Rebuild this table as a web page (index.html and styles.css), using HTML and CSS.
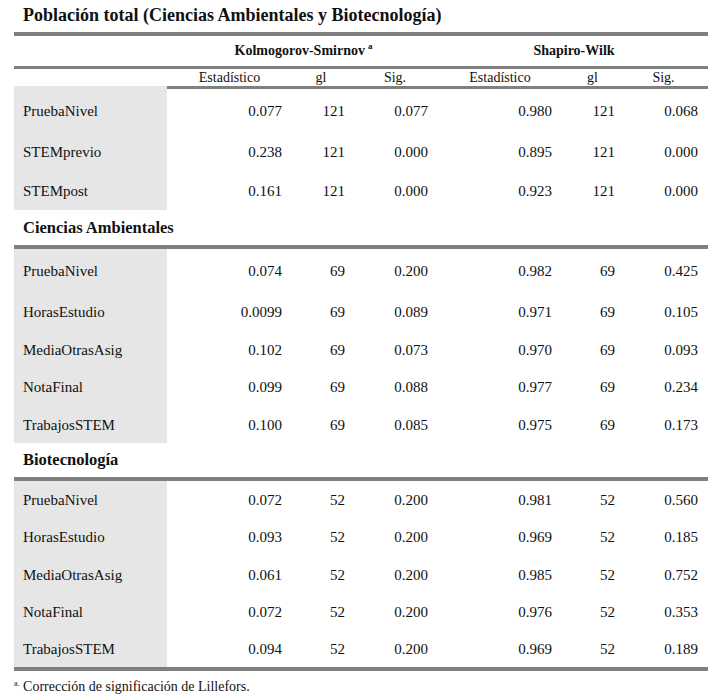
FILE: index.html
```html
<!DOCTYPE html>
<html lang="es">
<head>
<meta charset="utf-8">
<title>Pruebas de normalidad</title>
<link rel="stylesheet" href="styles.css">
</head>
<body>
<div class="page">
  <div class="title">Población total (Ciencias Ambientales y Biotecnología)</div>
  <div class="tbl">
    <div class="row grp">
      <div class="lab"></div>
      <div class="gh ks">Kolmogorov-Smirnov <sup>a</sup></div>
      <div class="gh sw">Shapiro-Wilk</div>
    </div>
    <div class="row sub">
      <div class="lab"></div>
      <div>Estadístico</div><div>gl</div><div>Sig.</div>
      <div>Estadístico</div><div>gl</div><div>Sig.</div>
    </div>

    <div class="row data h43"><div class="lab">PruebaNivel</div><div>0.077</div><div>121</div><div>0.077</div><div>0.980</div><div>121</div><div>0.068</div></div>
    <div class="row data h39"><div class="lab">STEMprevio</div><div>0.238</div><div>121</div><div>0.000</div><div>0.895</div><div>121</div><div>0.000</div></div>
    <div class="row data h39"><div class="lab">STEMpost</div><div>0.161</div><div>121</div><div>0.000</div><div>0.923</div><div>121</div><div>0.000</div></div>

    <div class="section s1">Ciencias Ambientales</div>
    <div class="row data h42"><div class="lab">PruebaNivel</div><div>0.074</div><div>69</div><div>0.200</div><div>0.982</div><div>69</div><div>0.425</div></div>
    <div class="row data h40"><div class="lab">HorasEstudio</div><div>0.0099</div><div>69</div><div>0.089</div><div>0.971</div><div>69</div><div>0.105</div></div>
    <div class="row data h36"><div class="lab">MediaOtrasAsig</div><div>0.102</div><div>69</div><div>0.073</div><div>0.970</div><div>69</div><div>0.093</div></div>
    <div class="row data h38"><div class="lab">NotaFinal</div><div>0.099</div><div>69</div><div>0.088</div><div>0.977</div><div>69</div><div>0.234</div></div>
    <div class="row data h38"><div class="lab">TrabajosSTEM</div><div>0.100</div><div>69</div><div>0.085</div><div>0.975</div><div>69</div><div>0.173</div></div>

    <div class="section s2">Biotecnología</div>
    <div class="row data h37"><div class="lab">PruebaNivel</div><div>0.072</div><div>52</div><div>0.200</div><div>0.981</div><div>52</div><div>0.560</div></div>
    <div class="row data h37"><div class="lab">HorasEstudio</div><div>0.093</div><div>52</div><div>0.200</div><div>0.969</div><div>52</div><div>0.185</div></div>
    <div class="row data h38"><div class="lab">MediaOtrasAsig</div><div>0.061</div><div>52</div><div>0.200</div><div>0.985</div><div>52</div><div>0.752</div></div>
    <div class="row data h37"><div class="lab">NotaFinal</div><div>0.072</div><div>52</div><div>0.200</div><div>0.976</div><div>52</div><div>0.353</div></div>
    <div class="row data h37 last"><div class="lab">TrabajosSTEM</div><div>0.094</div><div>52</div><div>0.200</div><div>0.969</div><div>52</div><div>0.189</div></div>
  </div>
  <div class="note"><sup>a.</sup> Corrección de significación de Lillefors.</div>
</div>
</body>
</html>
```

FILE: styles.css
```css
html, body {
  margin: 0;
  padding: 0;
  background: #ffffff;
}

body {
  font-family: "Liberation Serif", "Times New Roman", serif;
  color: #111111;
}

.page {
  width: 694px;
  margin-left: 14px;
}

.title {
  height: 32px;
  line-height: 30px;
  padding-left: 9px;
  font-size: 18px;
  font-weight: bold;
}

.tbl {
  border-top: 4px solid #7f7f7f;
  border-bottom: 4px solid #7f7f7f;
}

.row {
  display: grid;
  grid-template-columns: 153px 125px 58px 90px 120px 65px 83px;
}

.row > div {
  display: flex;
  align-items: center;
}

/* group header row */
.grp {
  height: 30px;
  border-bottom: 3px solid #7f7f7f;
}

.gh {
  justify-content: center;
  font-weight: bold;
  font-size: 14px;
}

.gh.ks {
  grid-column: 2 / 5;
}

.gh.sw {
  grid-column: 5 / 8;
}

.gh sup {
  font-size: 9px;
  position: relative;
  top: -5px;
  vertical-align: baseline;
  margin-left: 3px;
}

/* sub header row */
.sub {
  font-size: 14px;
}

.sub > div {
  height: 17px;
  justify-content: center;
  border-bottom: 3px solid #7f7f7f;
}

.sub > .lab {
  border-bottom: 3px solid #e6e6e6;
}

.sub > div:nth-child(7) { padding-right: 6px; }

/* data rows */
.data {
  font-size: 15px;
}

.data > div {
  justify-content: flex-end;
  padding-top: 2px;
}

.data > .lab {
  justify-content: flex-start;
  padding-left: 9px;
  background: #e6e6e6;
}

.data > div:nth-child(2) { padding-right: 10px; }
.data > div:nth-child(3) { padding-right: 5px; }
.data > div:nth-child(4) { padding-right: 12px; }
.data > div:nth-child(5) { padding-right: 8px; }
.data > div:nth-child(6) { padding-right: 10px; }
.data > div:nth-child(7) { padding-right: 10px; }

.h36 { height: 36px; }
.h37 { height: 37px; }
.h38 { height: 38px; }
.h39 { height: 39px; }
.h40 { height: 40px; }
.h42 { height: 42px; }
.h43 { height: 43px; }

/* section headings */
.section {
  padding-left: 9px;
  font-size: 16.5px;
  font-weight: bold;
  display: flex;
  align-items: center;
  border-bottom: 4px solid #7f7f7f;
}

.s1 { height: 35px; }
.s2 { height: 34px; }

/* footnote */
.note {
  padding-top: 6px;
  line-height: 20px;
  font-size: 14px;
}

.note sup {
  font-size: 8px;
  position: relative;
  top: -5px;
  vertical-align: baseline;
}
```
